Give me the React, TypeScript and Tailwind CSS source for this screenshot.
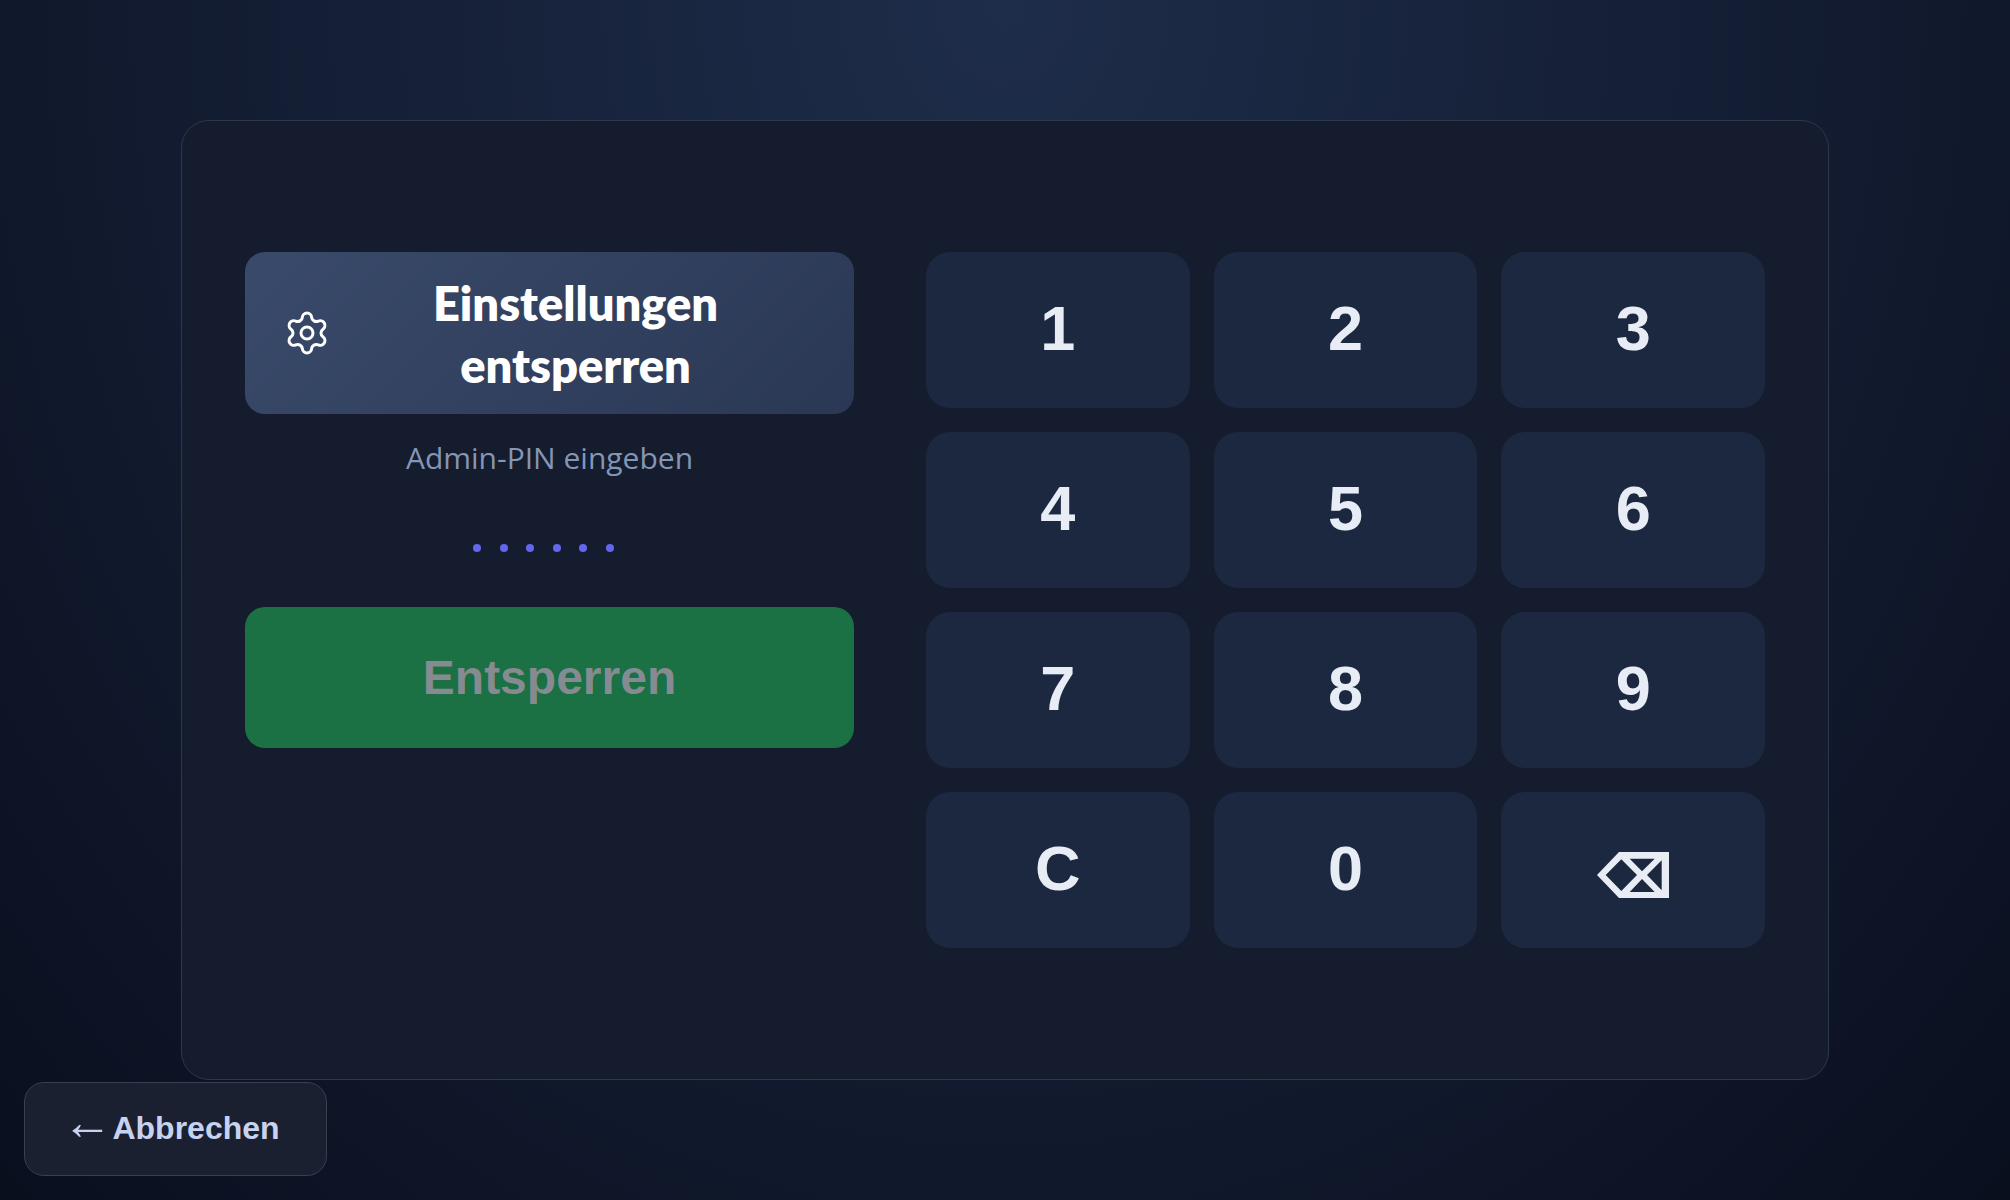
import React from "react";
import { Settings } from "lucide-react";

const keys = ["1", "2", "3", "4", "5", "6", "7", "8", "9", "C", "0"];

export default function App() {
  return (
    <div className="relative flex h-screen w-full items-center justify-center overflow-hidden bg-[radial-gradient(ellipse_at_top,#1e2d4a,#0a0f1e)] font-['Liberation_Sans',sans-serif]">
      <div className="flex h-[960px] w-[1648px] flex-col justify-center rounded-[28px] border border-[#2c3750] bg-[#151c2e] p-[63px]">
        <div className="flex items-start gap-[72px]">
          <div className="flex flex-1 flex-col">
            <div className="flex h-[162px] items-center rounded-[20px] bg-[linear-gradient(135deg,#3a4a6a,#2a3855)] px-[34px]">
              <Settings className="ml-[4px] h-[48px] w-[48px] shrink-0 text-white" strokeWidth={1.5} />
              <div className="flex-1 pt-[2px] text-center font-['Lato',sans-serif] text-[47px] leading-[62px] font-extrabold text-white">
                Einstellungen entsperren
              </div>
            </div>
            <div className="mt-6 text-center font-['Open_Sans',sans-serif] text-[30px] leading-[40px] text-[#8496b5]">
              Admin-PIN eingeben
            </div>
            <div className="mt-[54px] flex h-8 items-center justify-center gap-[18.6px] pr-[12px]">
              {[0, 1, 2, 3, 4, 5].map((i) => (
                <span key={i} className="h-2 w-2 rounded-full bg-[#6366f1]" />
              ))}
            </div>
            <button className="mt-[43px] h-[141px] rounded-[20px] bg-[#1b7044] text-[48px] font-bold text-[#858b90]">
              Entsperren
            </button>
          </div>
          <div className="grid w-[839px] shrink-0 grid-cols-3 gap-6">
            {keys.map((k) => (
              <button
                key={k}
                className="h-[156px] rounded-[24px] bg-[#1c2840] pb-[3px] text-[63px] font-bold text-[#e8edf5]"
              >
                {k}
              </button>
            ))}
            <button className="flex h-[156px] items-center justify-center rounded-[24px] bg-[#1c2840]" aria-label="Löschen">
              <svg width="72" height="46" viewBox="0 0 72 46" className="mt-[10px]">
                <path
                  fill="#e8edf5"
                  fillRule="evenodd"
                  d="M0 23 22 0H72V46H22ZM8.7 23 24.3 39 40 23 24.3 7.3ZM32.7 6.7 45 19.3 57.7 6.7ZM64.7 8.3 50 23 64.7 38.3ZM32.7 40H57.7L45 27Z"
                />
              </svg>
            </button>
          </div>
        </div>
      </div>
      <button className="absolute bottom-[24px] left-[24px] flex h-[94px] w-[303px] items-center justify-center rounded-[20px] border border-[#3a3f50] bg-[#1b2030] pb-[2px] text-[32px] font-bold text-[#c7d2f0]">
        <span className="-ml-[9px] mb-[12px] text-[50px] leading-none font-normal">←</span>
        <span>Abbrechen</span>
      </button>
    </div>
  );
}
